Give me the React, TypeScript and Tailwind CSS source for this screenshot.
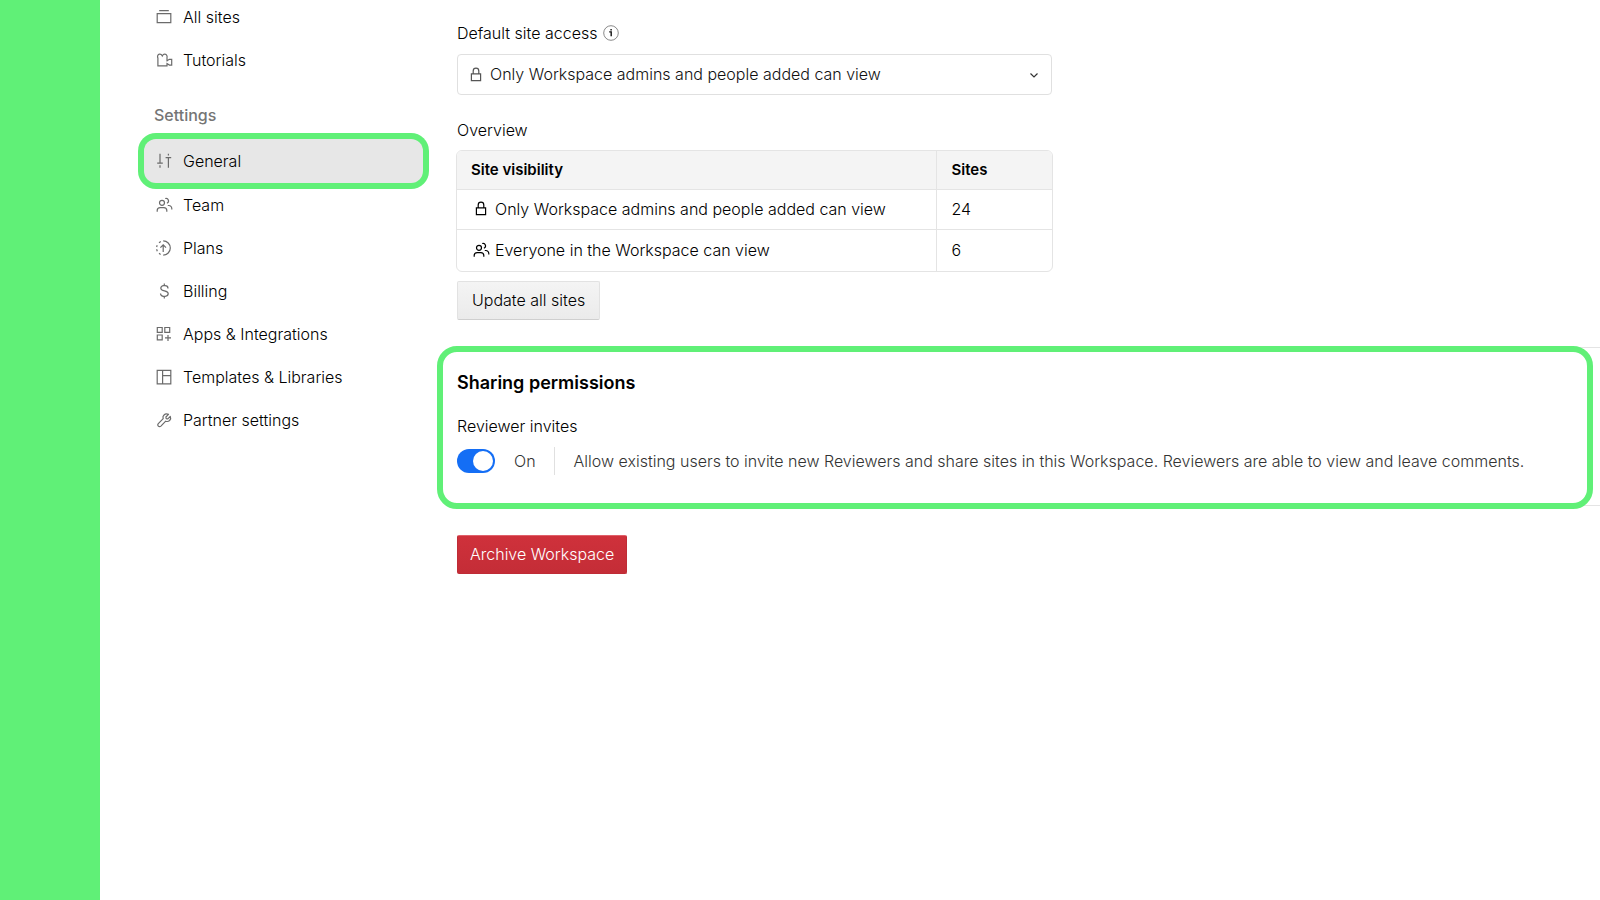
import React from 'react';

type IconProps = { className?: string };

const Icon: React.FC<IconProps & { children: React.ReactNode }> = ({ className = '', children }) => (
    <svg
        className={`w-4 h-4 shrink-0 overflow-visible ${className}`}
        viewBox="0 0 16 16"
        fill="none"
        stroke="currentColor"
        strokeWidth={1.2}
        aria-hidden="true"
    >
        {children}
    </svg>
);

const SitesIcon = () => (
    <Icon>
        <path d="M3.2 1.7h9.6M1.2 4.6h13.6v9H1.2z" />
    </Icon>
);

const TutorialsIcon = () => (
    <Icon>
        <path d="M1.9 6.2C1.2 4.8 1.5 2.4 3.6 2.2c1.3-.1 2.2.7 2.700 1.700.5-1 1.400-1.800 2.600-1.700 1.900.2 2.500 1.900 2.100 3.500v3.800M1.900 5.600v8.200H11v-2.200l2.400 1.500h2.300V7.300h-2.300L11 8.800" />
    </Icon>
);

const GeneralIcon = () => (
    <Icon>
        <path d="M4 .8v9.4M4 12.200v2.600M1.200 10.200h5.600M12.400 .8v1.800M12.400 4.600v10.200M9.600 4.600h5.600" />
    </Icon>
);

const PeopleIcon: React.FC<IconProps> = ({ className }) => (
    <Icon className={className}>
        <circle cx="6" cy="5.8" r="2.5" />
        <path d="M1.2 14.8v-1.2a3 3 0 0 1 3-3h3.600a3 3 0 0 1 3 3v1.200M9.200 1.500a2.500 2.500 0 0 1 1.700 4.700M11.800 8.500h1a3 3 0 0 1 3 3v1" />
    </Icon>
);

const PlansIcon = () => (
    <Icon>
        <path d="M7.2 .9a7.100 7.100 0 1 1 0 14.200M4.800 1.600 3 2.800M1.200 5.200.6 7M.6 9.300l.7 2M3 13.300l1.600 1.100" />
        <path d="M7.2 12V4.800M4.400 7.600l2.800-2.800L10 7.600" />
    </Icon>
);

const BillingIcon = () => (
    <Icon>
        <path d="M8.3 .4v2.300M8.300 13.300v2.300M12 5.400c0-1.600-1.200-2.700-3-2.700H7.600c-1.700 0-2.800 1-2.800 2.500 0 3.700 7.400 1.700 7.400 5.400 0 1.600-1.200 2.700-3 2.700H7.500c-1.800 0-3-1.100-3-2.700" />
    </Icon>
);

const AppsIcon = () => (
    <Icon>
        <path d="M1.3 1.5h4.900v4.900H1.300zM8.800 1.500h4.900v4.900H8.800zM1.300 9h4.900v4.900H1.300zM12 8.900v6M9 11.900h6" />
    </Icon>
);

const TemplatesIcon = () => (
    <Icon>
        <path d="M1.2 1.4h13.600v13.400H1.200zM6.600 1.400v13.400M6.600 6.600h8.200" />
    </Icon>
);

const WrenchIcon = () => (
    <Icon>
        <path
            strokeLinejoin="round"
            d="M12.5 2.4 9.9 5l.3 1.6 1.6.3 2.5-2.5c.7 1.5.3 3.1-.7 4.1-1.1 1-2.6 1.2-3.9.7l-4.8 4.9c-.8.7-1.9.7-2.6 0s-.7-1.8 0-2.5l4.9-4.9c-.5-1.3-.3-2.7.8-3.7 1.2-1.2 3-1.4 4.500-.6z"
        />
    </Icon>
);

const LockIcon: React.FC<IconProps> = ({ className }) => (
    <Icon className={className}>
        <path d="M3.4 6.9h9.2v6.7H3.400zM5.200 6.900V3.900a2.800 2.800 0 0 1 5.600 0v3" />
    </Icon>
);

const settingsItems = [
    { label: 'Team', icon: <PeopleIcon /> },
    { label: 'Plans', icon: <PlansIcon /> },
    { label: 'Billing', icon: <BillingIcon /> },
    { label: 'Apps & Integrations', icon: <AppsIcon /> },
    { label: 'Templates & Libraries', icon: <TemplatesIcon /> },
    { label: 'Partner settings', icon: <WrenchIcon /> },
];

const NavItem: React.FC<{ label: string; icon: React.ReactNode; active?: boolean }> = ({ label, icon, active }) => (
    <a
        href="#"
        aria-current={active ? 'page' : undefined}
        className={`flex items-center gap-[11px] pl-3 text-black ${
            active ? 'h-11 rounded-xl bg-[#e7e7e7] ring-6 ring-[#60f077]' : 'h-[43px]'
        }`}
    >
        <span className="text-[#6b6b6b]">{icon}</span>
        {label}
    </a>
);

const Sidebar = () => (
    <nav className="-mt-[5px] ml-11 w-[279px] shrink-0">
        <NavItem label="All sites" icon={<SitesIcon />} />
        <NavItem label="Tutorials" icon={<TutorialsIcon />} />
        <h2 className="mt-[22px] mb-3 pl-2.5 font-medium text-[#757575]">Settings</h2>
        <NavItem label="General" icon={<GeneralIcon />} active />
        {settingsItems.map((item) => (
            <NavItem key={item.label} label={item.label} icon={item.icon} />
        ))}
    </nav>
);

const SiteAccess = () => (
    <section className="w-[597px] pt-[21px]">
        <div className="flex items-center gap-1.5 pl-px">
            <label htmlFor="site-access">Default site access</label>
            <button type="button" aria-label="About default site access">
                <svg className="w-4 h-4" viewBox="0 0 16 16" fill="none" aria-hidden="true">
                    <circle cx="8" cy="8" r="7.3" stroke="#8a8a8a" />
                    <path d="M6.2 6.900h2v4.400M8.100 4v1.400" stroke="#111" strokeWidth={1.4} />
                </svg>
            </button>
        </div>
        <div className="mx-px mt-[9px] grid items-center">
            <select
                id="site-access"
                className="col-start-1 row-start-1 h-[41px] appearance-none rounded border border-[#e0e0e0] bg-white pb-px pl-8 text-[#111]"
            >
                <option>Only Workspace admins and people added can view</option>
                <option>Everyone in the Workspace can view</option>
            </select>
            <LockIcon className="pointer-events-none col-start-1 row-start-1 ml-[11px] text-[#555]" />
            <svg
                className="pointer-events-none col-start-1 row-start-1 mr-3.5 h-2 w-2 justify-self-end"
                viewBox="0 0 8 8"
                fill="none"
                stroke="#333"
                strokeWidth={1.2}
                aria-hidden="true"
            >
                <path d="m.5 2.500 3.500 3.500 3.500-3.500" />
            </svg>
        </div>

        <h3 className="mt-[23px] pl-px">Overview</h3>
        <div className="mt-2 overflow-hidden rounded-md border border-[#e4e4e4]">
            <table className="w-full border-collapse text-left">
                <thead>
                    <tr className="h-[38px] border-b border-[#e4e4e4] bg-[#f4f4f4] text-[15px]">
                        <th className="border-r border-[#e4e4e4] pl-3.5 font-semibold">Site visibility</th>
                        <th className="w-[116px] pl-[15px] font-semibold">Sites</th>
                    </tr>
                </thead>
                <tbody>
                    <tr className="h-10 border-b border-[#e4e4e4]">
                        <td className="border-r border-[#e4e4e4] pl-4">
                            <span className="flex items-center gap-1.5">
                                <LockIcon />
                                Only Workspace admins and people added can view
                            </span>
                        </td>
                        <td className="pl-[15px]">24</td>
                    </tr>
                    <tr className="h-[42px]">
                        <td className="border-r border-[#e4e4e4] pb-px pl-4">
                            <span className="flex items-center gap-1.5">
                                <PeopleIcon />
                                Everyone in the Workspace can view
                            </span>
                        </td>
                        <td className="pb-px pl-[15px]">6</td>
                    </tr>
                </tbody>
            </table>
        </div>
        <button
            type="button"
            className="mt-[9px] ml-px h-[39px] rounded-xs border border-[#e2e2e2] border-b-[#cfcfcf] bg-linear-to-b from-[#f4f4f4] to-[#ebebeb] px-3.5 pb-0.5 text-black"
        >
            Update all sites
        </button>
    </section>
);

const SharingPermissions = () => (
    <section className="relative mt-[27px] h-[159px] border-y border-[#e4e4e4] pl-px">
        <div className="pointer-events-none absolute -top-0.5 right-[7px] -bottom-1 -left-[19px] rounded-[20px] border-6 border-[#60f077]" />
        <h2 className="pt-[21px] text-lg leading-7 font-semibold">Sharing permissions</h2>
        <label htmlFor="reviewer-invites" className="mt-[17px] block">
            Reviewer invites
        </label>
        <div className="mt-[9px] flex items-center">
            <input
                id="reviewer-invites"
                type="checkbox"
                role="switch"
                defaultChecked
                className="h-6 w-[38px] shrink-0 appearance-none rounded-full bg-[#bbb] p-0.5 before:block before:h-5 before:w-5 before:rounded-full before:bg-white checked:bg-[#146ef5] checked:before:ml-auto"
            />
            <span className="ml-[19px] text-[#333]">On</span>
            <p className="ml-[18px] border-l border-[#e0e0e0] py-0.5 pl-[19px] text-[#333]">
                Allow existing users to invite new Reviewers and share sites in this Workspace. Reviewers are able to view and leave comments.
            </p>
        </div>
    </section>
);

const App: React.FC = () => (
    <div className="flex min-h-screen overflow-hidden bg-white font-['Inter',sans-serif] text-base font-light text-black">
        <div className="w-[100px] shrink-0 bg-[#60f077]" />
        <Sidebar />
        <main className="ml-[33px] min-w-0 flex-1">
            <SiteAccess />
            <SharingPermissions />
            <button
                type="button"
                className="mt-[29px] ml-px h-[39px] rounded-xs border border-[#bf2c36] border-t-[#e0606a] bg-linear-to-b from-[#cf313b] to-[#c42d37] px-3 pb-0.5 text-white"
            >
                Archive Workspace
            </button>
        </main>
    </div>
);

export default App;
